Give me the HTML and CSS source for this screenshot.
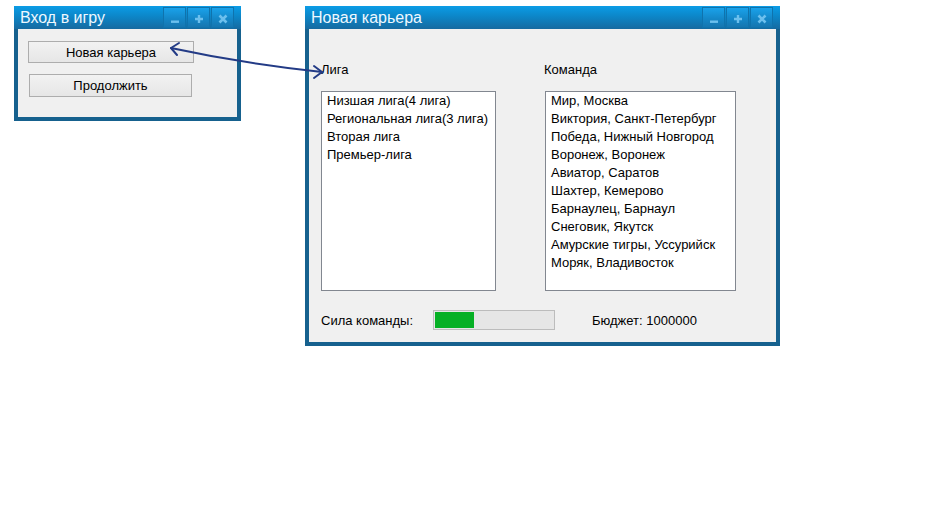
FILE: index.html
```html
<!DOCTYPE html>
<html lang="ru">
<head>
<meta charset="utf-8">
<title>Игра</title>
<link rel="stylesheet" href="styles.css">
</head>
<body>
<div class="desktop">
  <section class="window win-login">
    <header class="titlebar">
      <span class="title">Вход в игру</span>
      <div class="tbtns">
        <button class="tbtn"><svg width="10" height="10" viewBox="0 0 10 10"><rect x="1" y="6.5" width="8" height="2.4" fill="#6cc0ee"/></svg></button>
        <button class="tbtn"><svg width="10" height="10" viewBox="0 0 10 10"><path d="M5 1v8M1 5h8" stroke="#6cc0ee" stroke-width="2.4"/></svg></button>
        <button class="tbtn"><svg width="10" height="10" viewBox="0 0 10 10"><path d="M1.5 1.5l7 7M8.5 1.5l-7 7" stroke="#6cc0ee" stroke-width="2.6"/></svg></button>
      </div>
    </header>
    <div class="body login-body">
      <button class="btn btn-new">Новая карьера</button>
      <button class="btn btn-cont">Продолжить</button>
    </div>
  </section>

  <section class="window win-career">
    <header class="titlebar">
      <span class="title">Новая карьера</span>
      <div class="tbtns">
        <button class="tbtn"><svg width="10" height="10" viewBox="0 0 10 10"><rect x="1" y="6.5" width="8" height="2.4" fill="#6cc0ee"/></svg></button>
        <button class="tbtn"><svg width="10" height="10" viewBox="0 0 10 10"><path d="M5 1v8M1 5h8" stroke="#6cc0ee" stroke-width="2.4"/></svg></button>
        <button class="tbtn"><svg width="10" height="10" viewBox="0 0 10 10"><path d="M1.5 1.5l7 7M8.5 1.5l-7 7" stroke="#6cc0ee" stroke-width="2.6"/></svg></button>
      </div>
    </header>
    <div class="body career-body">
      <div class="cols">
        <div class="col col-league">
          <div class="label">Лига</div>
          <ul class="listbox">
            <li>Низшая лига(4 лига)</li>
            <li>Региональная лига(3 лига)</li>
            <li>Вторая лига</li>
            <li>Премьер-лига</li>
          </ul>
        </div>
        <div class="col col-team">
          <div class="label">Команда</div>
          <ul class="listbox">
            <li>Мир, Москва</li>
            <li>Виктория, Санкт-Петербург</li>
            <li>Победа, Нижный Новгород</li>
            <li>Воронеж, Воронеж</li>
            <li>Авиатор, Саратов</li>
            <li>Шахтер, Кемерово</li>
            <li>Барнаулец, Барнаул</li>
            <li>Снеговик, Якутск</li>
            <li>Амурские тигры, Уссурийск</li>
            <li>Моряк, Владивосток</li>
          </ul>
        </div>
      </div>
      <div class="stats">
        <span class="stat-label">Сила команды:</span>
        <div class="progress"><div class="fill" style="width:39px"></div></div>
        <span class="budget">Бюджет: 1000000</span>
      </div>
    </div>
  </section>

  <svg class="arrow" width="949" height="520" viewBox="0 0 949 520">
    <g fill="none" stroke="#233b86" stroke-width="2" stroke-linecap="round" stroke-linejoin="round">
      <path d="M171 48 Q245 64 322 72"/>
      <path d="M179 43 L171 48 L177 55"/>
      <path d="M314 66 L322 72 L314 78"/>
    </g>
  </svg>
</div>
</body>
</html>
```
FILE: styles.css
```css
* { box-sizing: border-box; }
html, body { margin: 0; padding: 0; background: #ffffff; }
body { font-family: "Liberation Sans", Arial, sans-serif; font-size: 13px; color: #000; }

.desktop { position: relative; width: 949px; height: 520px; overflow: hidden; }

.window {
  position: absolute;
  background: #16618e;
  display: flex;
  flex-direction: column;
}
.win-login { left: 14px; top: 6px; width: 227px; height: 115px; }
.win-career { left: 305px; top: 6px; width: 475px; height: 340px; }

.titlebar {
  height: 23px;
  flex: none;
  display: flex;
  align-items: center;
  justify-content: space-between;
  padding: 0 7px 0 6px;
  background: linear-gradient(to bottom, #0b9ce6 0%, #0c86c8 45%, #166aa0 100%);
}
.title {
  color: #eef8ff;
  font-size: 16px;
  line-height: 23px;
  white-space: nowrap;
}
.tbtns { display: flex; gap: 1px; align-self: flex-start; margin-top: 1px; }
.tbtn {
  width: 23px;
  height: 21px;
  padding: 0;
  border: 1px solid #0f73ad;
  background: linear-gradient(to bottom, #1aa2ea 0%, #1488c9 55%, #1676b0 100%);
  display: flex;
  align-items: center;
  justify-content: center;
}
.tbtn svg { display: block; margin-top: 2px; }

.body {
  flex: 1;
  margin: 0 4px 4px 4px;
  background: #f0f0f0;
}

.login-body {
  display: flex;
  flex-direction: column;
  align-items: flex-start;
  padding: 12px 0 0 10px;
  gap: 11px;
}
.btn {
  font-family: "Liberation Sans", Arial, sans-serif;
  font-size: 13px;
  color: #000;
  border: 1px solid #adadad;
  background: linear-gradient(to bottom, #f2f2f2, #e6e6e6);
  padding: 0;
}
.btn-new { width: 166px; height: 22px; }
.btn-cont { width: 163px; height: 23px; margin-left: 1px; }

.career-body {
  display: flex;
  flex-direction: column;
  padding: 33px 12px 0 12px;
}
.cols { display: flex; gap: 49px; }
.col { display: flex; flex-direction: column; }
.col-league { width: 175px; }
.col-team { width: 191px; }
.label { line-height: 16px; height: 16px; margin-bottom: 13px; }
.col-team .label { margin-left: -1px; }
.listbox {
  list-style: none;
  margin: 0;
  padding: 0 0 0 5px;
  height: 200px;
  background: #ffffff;
  border: 1px solid #828790;
}
.listbox li { line-height: 18px; height: 18px; white-space: nowrap; }

.stats {
  display: flex;
  align-items: center;
  margin-top: 19px;
  height: 20px;
}
.stat-label { width: 112px; }
.progress {
  width: 122px;
  height: 20px;
  border: 1px solid #bcbcbc;
  background: #e6e6e6;
  padding: 1px;
}
.fill { height: 16px; background: #06b025; }
.budget { margin-left: 37px; }

.arrow { position: absolute; left: 0; top: 0; pointer-events: none; }
```
